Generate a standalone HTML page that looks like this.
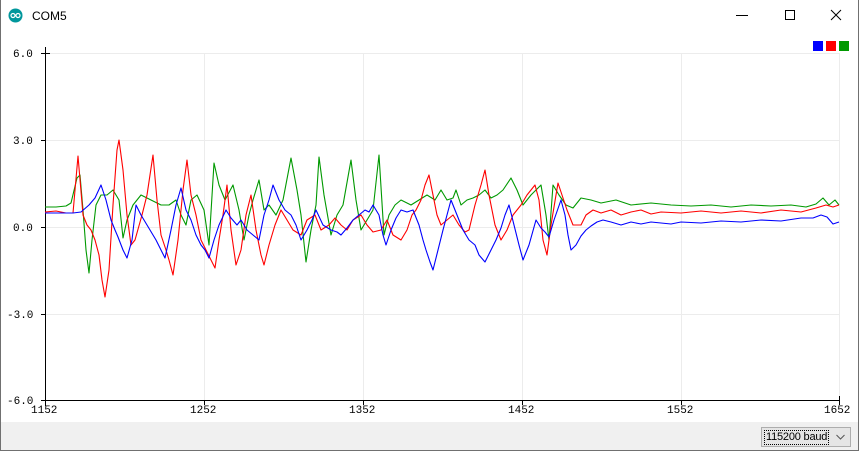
<!DOCTYPE html>
<html><head><style>
body{margin:0;width:859px;height:452px;overflow:hidden;background:#fff;font-family:"Liberation Sans",sans-serif}
.win{position:absolute;left:0;top:0;width:857px;height:450px;border:1px solid #707070;border-top:none;background:#fff}
.title{position:absolute;left:31px;top:9px;font-size:12px;color:#000}
.bottom{position:absolute;left:0;top:422px;width:857px;height:28px;background:#f0f0f0}
.baud{position:absolute;left:760px;top:427px;width:90px;height:20px;border:1px solid #adadad;background:#e5e5e5;box-sizing:border-box;font-size:11px}
.baud span{position:absolute;left:2px;top:2px;border:1px dotted #000;padding:0 1px;line-height:13px;letter-spacing:-0.2px}
</style></head><body>
<div class="win">
<svg style="position:absolute;left:7px;top:8px" width="15" height="15"><circle cx="7.5" cy="7.5" r="7" fill="#00979c"/><circle cx="5" cy="7.5" r="2" fill="none" stroke="#fff" stroke-width="1.2"/><circle cx="10" cy="7.5" r="2" fill="none" stroke="#fff" stroke-width="1.2"/></svg>
<div class="title">COM5</div>
<svg style="position:absolute;left:0;top:0" width="859" height="452">
<line x1="735" y1="15.5" x2="747" y2="15.5" stroke="#000"/>
<rect x="784.5" y="10.5" width="9" height="9" fill="none" stroke="#000"/>
<path d="M830 10L840 20M840 10L830 20" stroke="#000"/>
<rect x="812" y="41" width="10" height="10" fill="#00f"/><rect x="825" y="41" width="10" height="10" fill="#f00"/><rect x="838" y="41" width="10" height="10" fill="#009900"/>
<g stroke="#ececec" stroke-width="1">
<line x1="44" y1="53.5" x2="838" y2="53.5"/><line x1="44" y1="140.5" x2="838" y2="140.5"/><line x1="44" y1="227.5" x2="838" y2="227.5"/><line x1="44" y1="314.5" x2="838" y2="314.5"/>
<line x1="203.5" y1="53" x2="203.5" y2="400"/><line x1="362.5" y1="53" x2="362.5" y2="400"/><line x1="521.5" y1="53" x2="521.5" y2="400"/><line x1="680.5" y1="53" x2="680.5" y2="400"/><line x1="838.5" y1="53" x2="838.5" y2="400"/>
</g>
<g stroke="#000" stroke-width="1">
<line x1="44.5" y1="47" x2="44.5" y2="406"/><line x1="40" y1="400.5" x2="838" y2="400.5"/>
<line x1="40" y1="53.5" x2="49" y2="53.5"/>
<line x1="40" y1="140.5" x2="44" y2="140.5"/><line x1="40" y1="227.5" x2="44" y2="227.5"/><line x1="40" y1="314.5" x2="44" y2="314.5"/>
<line x1="203.5" y1="400" x2="203.5" y2="405"/><line x1="362.5" y1="400" x2="362.5" y2="405"/><line x1="521.5" y1="400" x2="521.5" y2="405"/><line x1="680.5" y1="400" x2="680.5" y2="405"/><line x1="838.5" y1="396" x2="838.5" y2="405"/>
</g>
<g font-family="Liberation Mono,monospace" font-size="11" fill="#000">
<text x="12" y="57">6.0</text><text x="12" y="144">3.0</text><text x="12" y="231">0.0</text><text x="6" y="318">-3.0</text><text x="6" y="404">-6.0</text>
<text x="30" y="413">1152</text><text x="189" y="413">1252</text><text x="348" y="413">1352</text><text x="507" y="413">1452</text><text x="666" y="413">1552</text><text x="823" y="413">1652</text>
</g>
<g fill="none" stroke-width="1.1" stroke-linejoin="round">
<polyline stroke="#009900" points="44,207 55,207 65,206 70,203 76,178 79,175 82,210 85,250 88,273 91,240 95,205 100,195 106,195 112,190 118,200 122,238 126,220 132,205 140,195 150,200 160,205 168,205 175,200 180,215 185,225 190,200 196,195 203,210 208,245 213,163 218,185 224,200 232,185 238,210 243,240 248,215 252,200 258,180 263,210 268,205 275,215 282,200 290,158 296,190 300,215 305,262 310,230 315,205 318,157 323,195 330,235 336,215 342,205 350,160 355,200 360,230 366,220 372,210 378,155 383,235 388,215 394,205 400,200 410,205 418,200 426,195 434,200 440,190 446,200 452,198 455,190 460,205 466,200 472,198 478,195 484,190 490,198 496,195 502,190 510,178 516,190 522,205 530,195 540,185 545,215 548,240 552,185 558,195 565,205 572,208 580,198 590,200 600,203 615,200 630,205 650,203 670,205 690,206 710,205 730,207 750,205 770,206 790,205 805,207 815,204 822,198 828,205 834,200 838,205"/>
<polyline stroke="#f00" points="44,212 55,211 65,213 72,213 77,156 82,215 86,225 90,230 94,240 98,255 101,280 104,297 108,270 112,205 116,150 118,140 122,170 126,215 130,245 134,240 141,215 146,195 152,155 156,200 160,235 165,250 168,260 172,275 177,240 182,190 186,160 190,195 195,215 200,240 205,250 210,260 214,268 218,240 222,215 226,185 230,230 235,265 240,250 245,215 250,195 255,230 260,255 263,265 268,245 274,225 280,210 286,220 292,230 300,235 306,220 314,215 320,230 328,225 334,218 340,225 346,230 352,220 360,215 366,225 372,232 380,230 386,220 392,235 400,240 406,230 411,215 415,210 420,200 424,185 428,175 432,195 436,215 440,225 446,220 452,215 458,225 464,232 468,230 474,205 480,185 484,170 488,195 494,225 500,240 506,230 512,215 520,205 526,195 534,185 538,200 542,240 546,255 550,225 557,183 561,195 566,210 572,225 580,225 585,215 592,210 600,213 610,210 620,215 630,212 640,210 650,214 660,212 680,213 700,211 720,213 740,211 760,213 780,210 800,212 815,208 825,205 832,207 838,205"/>
<polyline stroke="#00f" points="44,213 60,213 72,213 80,212 88,205 94,198 100,185 105,200 110,220 114,230 117,237 122,250 126,258 131,240 135,205 140,215 146,225 152,235 155,240 160,250 164,258 170,230 175,205 180,188 185,210 190,220 195,235 200,245 204,250 208,258 213,240 218,225 225,210 230,218 236,225 240,220 246,230 252,235 258,240 263,215 268,200 272,185 278,200 284,210 290,215 295,225 300,240 306,230 311,220 315,210 322,225 330,230 336,232 340,235 346,228 352,220 358,215 364,210 368,212 372,205 378,215 382,235 385,245 390,230 395,218 400,210 406,212 412,210 418,225 422,240 425,250 429,262 432,270 437,250 442,230 446,215 450,200 456,215 462,230 468,240 474,245 478,255 484,262 490,250 495,240 500,228 504,215 508,205 513,225 518,245 522,260 528,245 535,220 540,228 544,232 548,237 553,220 560,200 564,215 567,235 570,250 575,245 580,236 585,230 590,226 596,222 602,220 610,222 620,225 630,222 640,224 650,222 660,223 670,224 680,222 700,223 720,221 740,222 760,220 780,221 800,218 812,218 820,215 826,217 832,224 838,222"/>
</g>
</svg>
<div class="bottom"></div>
<div class="baud"><span>115200 baud</span><svg style="position:absolute;right:5px;top:6px" width="9" height="6"><path d="M0.5 1L4.5 5L8.5 1" fill="none" stroke="#555"/></svg></div>
</div>
</body></html>
